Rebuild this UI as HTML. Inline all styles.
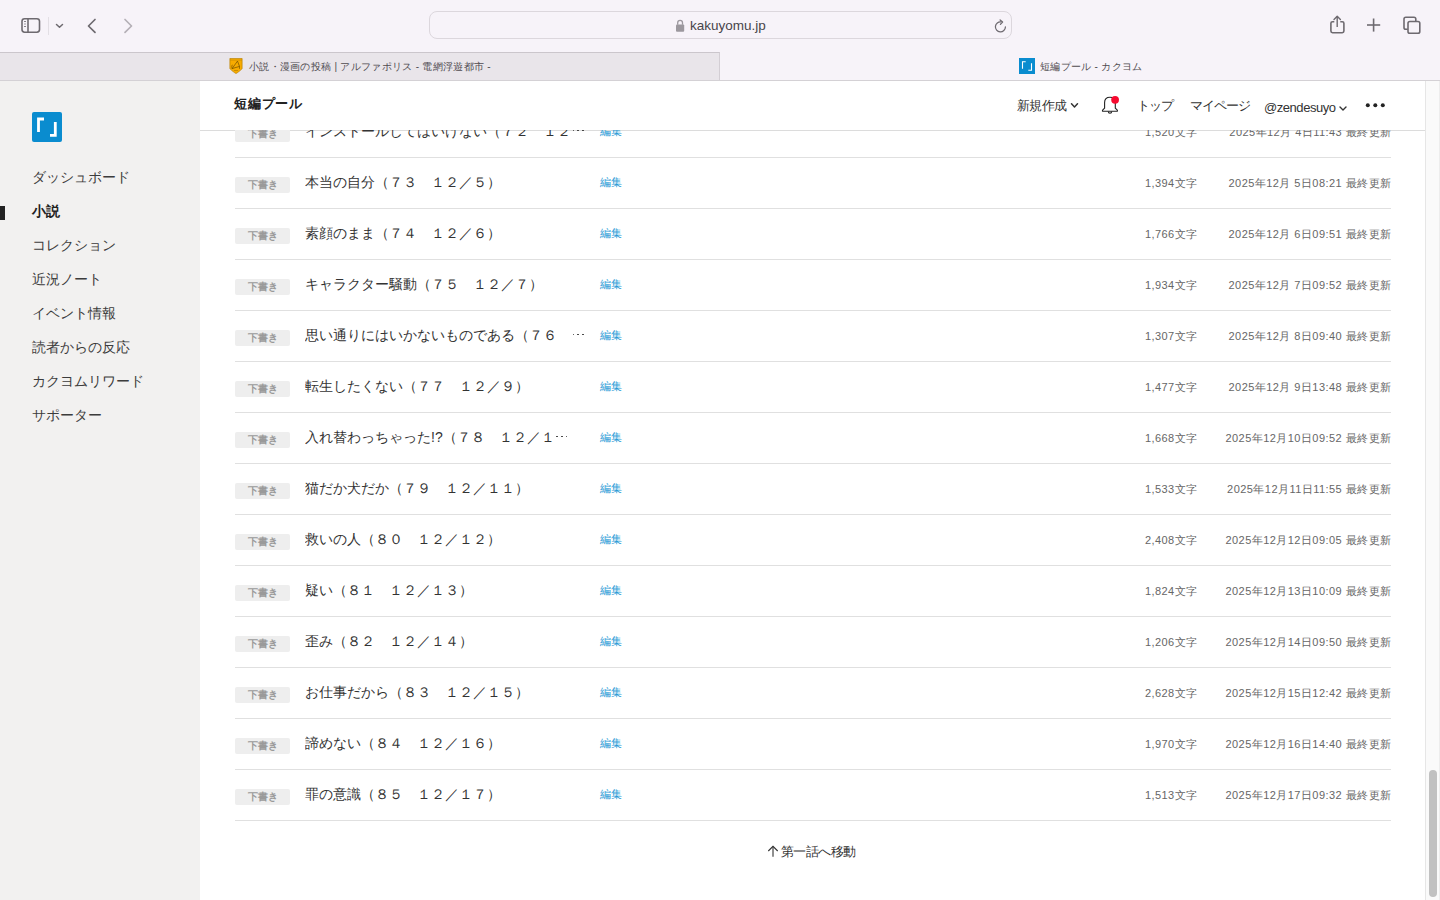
<!DOCTYPE html>
<html><head><meta charset="utf-8">
<style>
*{margin:0;padding:0;box-sizing:border-box}
html,body{width:1440px;height:900px;overflow:hidden;background:#fff;font-family:"Liberation Sans",sans-serif;color:#333}
.abs{position:absolute}
/* browser chrome */
#toolbar{position:absolute;left:0;top:0;width:1440px;height:52px;background:#f7f3f9}
#tabbar{position:absolute;left:0;top:52px;width:1440px;height:29px;background:#f7f3f9;border-bottom:1px solid #d4d1d5}
#tab1{position:absolute;left:0;top:0;width:720px;height:28px;background:#e9e5ea;border-right:1px solid #d3ced4;border-top:1px solid #cbc6cc}
.tabtxt{position:absolute;font-size:10px;color:#4f4b50;line-height:14px;white-space:nowrap;letter-spacing:0.3px}
#url{position:absolute;left:429px;top:11px;width:583px;height:28px;border:1px solid #dcd7dd;border-radius:8px;background:#f7f3f9}
#urltxt{position:absolute;left:690px;top:18px;font-size:13.5px;line-height:16px;color:#48454a;letter-spacing:0}
/* page */
#side{position:absolute;left:0;top:81px;width:200px;height:819px;background:#f2f1f0}
.nav{position:absolute;left:32px;font-size:14px;line-height:20px;color:#3c3c3c;white-space:nowrap}
#main{position:absolute;left:200px;top:81px;width:1225px;height:819px;background:#fff;overflow:hidden}
#hdr{position:absolute;left:0;top:0;width:1225px;height:49px;background:#fff;z-index:5}
#hdrline{position:absolute;left:0;top:49px;width:1225px;height:1px;background:#dcdcdc}
.row{position:absolute;left:35px;width:1156px;height:51px;border-bottom:1px solid #e0e0e0}
.badge{position:absolute;left:0;top:19px;width:55px;height:16px;background:#eee;border-radius:2px;color:#9a9a9a;font-size:10px;font-weight:bold;line-height:16px;text-align:center}
.ell{display:inline-block;position:relative;width:14px;height:0}
.ell i{position:absolute;top:-6.3px;width:1.7px;height:1.7px;border-radius:50%;background:#333}
.ttl{position:absolute;left:70px;top:14px;width:280px;font-size:14px;line-height:20px;color:#333;white-space:nowrap;overflow:hidden}
.edit{position:absolute;left:365px;top:16px;font-size:11px;line-height:16px;color:#2b9bd6}
.cnt{position:absolute;right:193.6px;top:17px;font-size:11px;line-height:16px;color:#666;white-space:nowrap;letter-spacing:0.4px}
.dt{position:absolute;right:-0.45px;top:17px;font-size:11px;line-height:16px;color:#666;white-space:nowrap;letter-spacing:0.45px}
#scroll{position:absolute;left:1425px;top:81px;width:15px;height:819px;background:#fafafa;border-left:1px solid #e6e6e6;border-right:1px solid #ededed}
#thumb{position:absolute;left:3px;top:689px;width:8px;height:127px;background:#c1c1c1;border-radius:4px}
</style></head><body>
<div id="toolbar">
  <svg class="abs" style="left:0;top:0" width="1440" height="52">
    <!-- sidebar icon -->
    <rect x="22" y="18.7" width="17.5" height="13.5" rx="2.6" fill="none" stroke="#6e6a70" stroke-width="1.6"/>
    <line x1="28" y1="18.7" x2="28" y2="32.2" stroke="#6e6a70" stroke-width="1.6"/>
    <line x1="24" y1="21.5" x2="26" y2="21.5" stroke="#7a767c" stroke-width="0.9"/>
    <line x1="24" y1="24" x2="26" y2="24" stroke="#9a969c" stroke-width="0.9"/>
    <line x1="24" y1="26.5" x2="26" y2="26.5" stroke="#7a767c" stroke-width="0.9"/>
    <line x1="48.5" y1="17" x2="48.5" y2="35" stroke="#e3dfe5" stroke-width="1"/>
    <polyline points="56.5,24.5 59.5,27.3 62.5,24.5" fill="none" stroke="#6e6a70" stroke-width="1.5" stroke-linecap="round" stroke-linejoin="round"/>
    <!-- back / fwd -->
    <polyline points="95,19.5 88.5,26 95,32.3" fill="none" stroke="#6e6a70" stroke-width="1.7" stroke-linecap="round" stroke-linejoin="round"/>
    <polyline points="125,19.5 131.5,26 125,32.3" fill="none" stroke="#b5b0b7" stroke-width="1.7" stroke-linecap="round" stroke-linejoin="round"/>
    <!-- share -->
    <path d="M1334.3,21.7 H1332.5 A1.6,1.6 0 0 0 1330.9,23.3 V31.1 A1.6,1.6 0 0 0 1332.5,32.7 H1342.3 A1.6,1.6 0 0 0 1343.9,31.1 V23.3 A1.6,1.6 0 0 0 1342.3,21.7 H1340.3" fill="none" stroke="#6e6a70" stroke-width="1.6"/>
    <line x1="1337.2" y1="16.5" x2="1337.2" y2="27" stroke="#6e6a70" stroke-width="1.4"/>
    <polyline points="1334,19.5 1337.2,16.3 1340.4,19.5" fill="none" stroke="#6e6a70" stroke-width="1.4" stroke-linecap="round" stroke-linejoin="round"/>
    <!-- plus -->
    <line x1="1373.6" y1="18.5" x2="1373.6" y2="31.6" stroke="#6e6a70" stroke-width="1.6"/>
    <line x1="1367" y1="25" x2="1380.2" y2="25" stroke="#6e6a70" stroke-width="1.6"/>
    <!-- tabs -->
    <path d="M1407.8,29.2 H1405.8 A1.8,1.8 0 0 1 1404,27.4 V19 A1.8,1.8 0 0 1 1405.8,17.2 H1414 A1.8,1.8 0 0 1 1415.8,19 V21.5" fill="none" stroke="#6e6a70" stroke-width="1.6"/>
    <rect x="1408" y="21.5" width="11.8" height="11.8" rx="1.8" fill="none" stroke="#6e6a70" stroke-width="1.6"/>
  </svg>
  <div id="url"></div>
  <svg class="abs" style="left:0;top:0" width="1440" height="52">
    <path d="M1005.4,26.9 A5,5 0 1 1 1001.1,21.9" fill="none" stroke="#6e6a70" stroke-width="1.25" stroke-linecap="round"/>
    <polyline points="1000.1,19.9 1002.6,22 1000.4,24.4" fill="none" stroke="#6e6a70" stroke-width="1.25" stroke-linecap="round" stroke-linejoin="round"/>
    <rect x="676" y="24.5" width="8.2" height="7.2" rx="1" fill="#9c989e"/>
    <path d="M677.7,24.8 V22.8 A2.4,2.4 0 0 1 682.5,22.8 V24.8" fill="none" stroke="#9c989e" stroke-width="1.3"/>
  </svg>
  <div id="urltxt">kakuyomu.jp</div>
</div>
<div id="tabbar">
  <div id="tab1">
    <svg class="abs" style="left:229px;top:5px" width="14" height="17" viewBox="0 0 14 17">
      <path d="M0.9,0.4 H13.1 V10.6 C13.1,11.2 7.6,15.4 7,15.6 C6.4,15.4 0.9,11.2 0.9,10.6 Z" fill="#f7ab00" stroke="#b87f00" stroke-width="0.7"/>
      <path d="M1,2.1 H13" stroke="#c08400" stroke-width="0.6"/>
      <path d="M8.5,3.1 L3.1,10.6 L10.5,8.4 V10.8 M8.5,3.1 L10.5,8.4 M3.4,6.8 C2.6,8 2.8,9.5 3.1,10.6" fill="none" stroke="#5a3e00" stroke-width="0.6"/>
      <path d="M5,12.5 H9" stroke="#a07000" stroke-width="0.5"/>
    </svg>
    <div class="tabtxt" style="left:249px;top:6.5px">小説・漫画の投稿 | アルファポリス - 電網浮遊都市 -</div>
  </div>
  <svg class="abs" style="left:1019px;top:6px" width="16" height="16" viewBox="0 0 16 16">
    <rect width="16" height="16" fill="#0a8ccf"/>
    <path d="M3.5,10.7 V3.7 H6.7" fill="none" stroke="#fff" stroke-width="1.1"/>
    <path d="M12.5,5.2 V12.3 H9.3" fill="none" stroke="#fff" stroke-width="1.1"/>
  </svg>
  <div class="tabtxt" style="left:1040px;top:7.5px">短編プール - カクヨム</div>
</div>

<div id="side">
  <svg class="abs" style="left:32px;top:31px" width="30" height="30" viewBox="0 0 30 30">
    <rect width="30" height="30" rx="2" fill="#0a8ccf"/>
    <path d="M6.5,20 V7 H12" fill="none" stroke="#fff" stroke-width="2.8"/>
    <path d="M23.3,10 V23.3 H18" fill="none" stroke="#fff" stroke-width="2.8"/>
  </svg>
  <div class="nav" style="top:86px">ダッシュボード</div>
  <div class="abs" style="left:0;top:125px;width:5px;height:14px;background:#222"></div>
  <div class="nav" style="top:120px;font-weight:bold;color:#222">小説</div>
  <div class="nav" style="top:154px">コレクション</div>
  <div class="nav" style="top:188px">近況ノート</div>
  <div class="nav" style="top:222px">イベント情報</div>
  <div class="nav" style="top:256px">読者からの反応</div>
  <div class="nav" style="top:290px">カクヨムリワード</div>
  <div class="nav" style="top:324px">サポーター</div>
</div>

<div id="main">
  <div id="hdr">
    <div class="abs" style="left:34px;top:13px;font-size:13px;line-height:20px;font-weight:bold;color:#222;letter-spacing:0.75px">短編プール</div>
    <div class="abs" style="left:817px;top:16px;font-size:13px;line-height:18px;color:#333;letter-spacing:-0.7px">新規作成</div>
    <svg class="abs" style="left:870px;top:21px" width="10" height="8"><polyline points="1.5,1.8 4.5,5 7.5,1.8" fill="none" stroke="#333" stroke-width="1.5" stroke-linecap="round" stroke-linejoin="round"/></svg>
    <svg class="abs" style="left:900px;top:14px" width="22" height="22" viewBox="0 0 22 22">
      <path d="M4.6,13.2 V7.5 C4.6,4.3 6.8,2.2 10,2.2 C13.2,2.2 15.3,4.3 15.3,7.5 V13.2 L17.3,15.2 Q17.9,16.3 16.8,16.3 H3.1 Q2,16.3 2.6,15.2 Z" fill="none" stroke="#222" stroke-width="1.1" stroke-linejoin="round"/>
      <path d="M8.3,16.6 A1.7,1.7 0 0 0 11.7,16.6" fill="none" stroke="#222" stroke-width="1.1"/>
      <circle cx="15.1" cy="4.8" r="3.9" fill="#f70a2f"/>
    </svg>
    <div class="abs" style="left:937px;top:16px;font-size:13px;line-height:18px;color:#333;letter-spacing:-0.9px">トップ</div>
    <div class="abs" style="left:990px;top:16px;font-size:13px;line-height:18px;color:#333;letter-spacing:-1.1px">マイページ</div>
    <div class="abs" style="left:1064px;top:18px;font-size:13px;line-height:18px;color:#333;letter-spacing:-0.45px">@zendesuyo</div>
    <svg class="abs" style="left:1139px;top:24px" width="10" height="8"><polyline points="1,2 4,5 7,2" fill="none" stroke="#333" stroke-width="1.4" stroke-linecap="round" stroke-linejoin="round"/></svg>
    <svg class="abs" style="left:1164px;top:20px" width="24" height="10"><circle cx="3.8" cy="4.3" r="2" fill="#222"/><circle cx="11.3" cy="4.3" r="2" fill="#222"/><circle cx="18.8" cy="4.3" r="2" fill="#222"/></svg>
  </div>
  <div id="hdrline"></div>
  <div id="rows" class="abs" style="left:0;top:-81px;width:1225px;height:900px">
<div class="row" style="top:107px"><span class="badge">下書き</span><span class="ttl">インストールしてはいけない（７２　１２<span class="ell"><i style="left:1.5px"></i><i style="left:6.2px"></i><i style="left:10.9px"></i></span></span><span class="edit">編集</span><span class="cnt">1,520文字</span><span class="dt">2025年12月 4日11:43 最終更新</span></div>
<div class="row" style="top:158px"><span class="badge">下書き</span><span class="ttl">本当の自分（７３　１２／５）</span><span class="edit">編集</span><span class="cnt">1,394文字</span><span class="dt">2025年12月 5日08:21 最終更新</span></div>
<div class="row" style="top:209px"><span class="badge">下書き</span><span class="ttl">素顔のまま（７４　１２／６）</span><span class="edit">編集</span><span class="cnt">1,766文字</span><span class="dt">2025年12月 6日09:51 最終更新</span></div>
<div class="row" style="top:260px"><span class="badge">下書き</span><span class="ttl">キャラクター騒動（７５　１２／７）</span><span class="edit">編集</span><span class="cnt">1,934文字</span><span class="dt">2025年12月 7日09:52 最終更新</span></div>
<div class="row" style="top:311px"><span class="badge">下書き</span><span class="ttl">思い通りにはいかないものである（７６　<span class="ell"><i style="left:1.5px"></i><i style="left:6.2px"></i><i style="left:10.9px"></i></span></span><span class="edit">編集</span><span class="cnt">1,307文字</span><span class="dt">2025年12月 8日09:40 最終更新</span></div>
<div class="row" style="top:362px"><span class="badge">下書き</span><span class="ttl">転生したくない（７７　１２／９）</span><span class="edit">編集</span><span class="cnt">1,477文字</span><span class="dt">2025年12月 9日13:48 最終更新</span></div>
<div class="row" style="top:413px"><span class="badge">下書き</span><span class="ttl">入れ替わっちゃった!?（７８　１２／１<span class="ell"><i style="left:1.5px"></i><i style="left:6.2px"></i><i style="left:10.9px"></i></span></span><span class="edit">編集</span><span class="cnt">1,668文字</span><span class="dt">2025年12月10日09:52 最終更新</span></div>
<div class="row" style="top:464px"><span class="badge">下書き</span><span class="ttl">猫だか犬だか（７９　１２／１１）</span><span class="edit">編集</span><span class="cnt">1,533文字</span><span class="dt">2025年12月11日11:55 最終更新</span></div>
<div class="row" style="top:515px"><span class="badge">下書き</span><span class="ttl">救いの人（８０　１２／１２）</span><span class="edit">編集</span><span class="cnt">2,408文字</span><span class="dt">2025年12月12日09:05 最終更新</span></div>
<div class="row" style="top:566px"><span class="badge">下書き</span><span class="ttl">疑い（８１　１２／１３）</span><span class="edit">編集</span><span class="cnt">1,824文字</span><span class="dt">2025年12月13日10:09 最終更新</span></div>
<div class="row" style="top:617px"><span class="badge">下書き</span><span class="ttl">歪み（８２　１２／１４）</span><span class="edit">編集</span><span class="cnt">1,206文字</span><span class="dt">2025年12月14日09:50 最終更新</span></div>
<div class="row" style="top:668px"><span class="badge">下書き</span><span class="ttl">お仕事だから（８３　１２／１５）</span><span class="edit">編集</span><span class="cnt">2,628文字</span><span class="dt">2025年12月15日12:42 最終更新</span></div>
<div class="row" style="top:719px"><span class="badge">下書き</span><span class="ttl">諦めない（８４　１２／１６）</span><span class="edit">編集</span><span class="cnt">1,970文字</span><span class="dt">2025年12月16日14:40 最終更新</span></div>
<div class="row" style="top:770px"><span class="badge">下書き</span><span class="ttl">罪の意識（８５　１２／１７）</span><span class="edit">編集</span><span class="cnt">1,513文字</span><span class="dt">2025年12月17日09:32 最終更新</span></div>
  </div>
  <svg class="abs" style="left:567px;top:764px" width="12" height="12"><polyline points="1.3,6 6,1.3 10.7,6" fill="none" stroke="#333" stroke-width="1.1"/><line x1="6" y1="1.5" x2="6" y2="11.8" stroke="#333" stroke-width="1.1"/></svg>
  <div class="abs" style="left:581px;top:762px;font-size:13px;line-height:18px;color:#333;letter-spacing:-0.6px">第一話へ移動</div>
</div>
<div id="scroll"><div id="thumb"></div></div>
</body></html>
